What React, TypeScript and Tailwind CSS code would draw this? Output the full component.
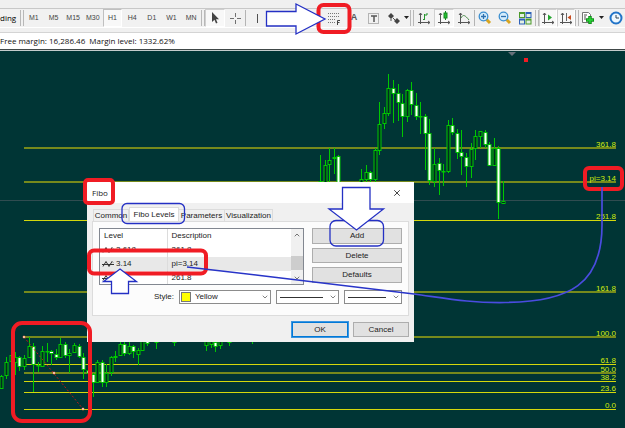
import type { ReactNode } from "react";
import { ChevronDown, ChevronUp, X } from "lucide-react";

const timeframes = ["M1", "M5", "M15", "M30", "H1", "H4", "D1", "W1", "MN"];

const fiboLines = [
  { y: 148, label: "361.8", soft: true },
  { y: 182, label: "pi=3.14", soft: true },
  { y: 220, label: "251.8" },
  { y: 292, label: "161.8", soft: true },
  { y: 337, label: "100.0", soft: true },
  { y: 364, label: "61.8" },
  { y: 373, label: "50.0", soft: true },
  { y: 381, label: "38.2" },
  { y: 392, label: "23.6" },
  { y: 409, label: "0.0" },
];

// x, high, low, body top, body bottom, falling
type Candle = [number, number, number, number, number, 0 | 1];

const candles: Candle[] = [
  [1, 375, 389, 376, 389, 0],
  [6, 357, 379, 362, 376, 0],
  [11, 353, 372, 355, 362, 0],
  [15, 352, 375, 357, 363, 0],
  [19, 356, 371, 357, 367, 1],
  [24, 355, 370, 358, 367, 0],
  [29, 337, 358, 346, 358, 0],
  [33, 343, 392, 346, 365, 1],
  [38, 362, 372, 365, 366, 0],
  [42, 346, 367, 351, 367, 0],
  [47, 343, 362, 351, 352, 0],
  [51, 350, 365, 351, 354, 1],
  [56, 349, 360, 354, 358, 1],
  [60, 338, 358, 344, 358, 0],
  [65, 342, 358, 344, 356, 1],
  [69, 349, 373, 353, 356, 0],
  [74, 343, 353, 345, 353, 0],
  [79, 344, 358, 346, 357, 1],
  [83, 353, 379, 357, 370, 1],
  [88, 368, 409, 370, 374, 1],
  [93, 373, 397, 374, 383, 1],
  [97, 360, 383, 362, 383, 0],
  [102, 360, 387, 362, 383, 1],
  [106, 364, 387, 373, 383, 0],
  [111, 356, 376, 357, 373, 0],
  [115, 351, 362, 356, 358, 0],
  [120, 342, 356, 344, 356, 0],
  [124, 342, 356, 344, 354, 1],
  [129, 342, 355, 346, 354, 0],
  [133, 345, 358, 346, 352, 1],
  [138, 348, 365, 350, 355, 0],
  [142, 340, 351, 340, 351, 0],
  [147, 340, 346, 340, 344, 1],
  [156, 340, 349, 340, 343, 0],
  [174, 340, 346, 340, 343, 0],
  [206, 340, 351, 340, 346, 0],
  [211, 340, 348, 340, 345, 0],
  [215, 340, 352, 342, 347, 1],
  [220, 340, 349, 340, 346, 0],
  [229, 340, 346, 340, 343, 0],
  [252, 340, 344, 340, 342, 0],
  [320, 155, 182, 181, 182, 0],
  [325, 160, 182, 165, 183, 0],
  [329, 148, 182, 160, 165, 0],
  [334, 148, 174, 157, 159, 0],
  [338, 155, 182, 156, 183, 1],
  [361, 169, 182, 179, 183, 0],
  [366, 165, 182, 172, 180, 0],
  [370, 171, 182, 172, 180, 1],
  [375, 148, 182, 150, 180, 0],
  [379, 102, 155, 124, 151, 0],
  [384, 107, 129, 113, 124, 0],
  [388, 74, 116, 88, 114, 0],
  [393, 80, 123, 88, 94, 1],
  [398, 84, 121, 93, 103, 1],
  [402, 94, 137, 103, 117, 1],
  [407, 89, 122, 90, 117, 0],
  [411, 82, 115, 90, 105, 1],
  [416, 93, 120, 105, 117, 1],
  [420, 102, 134, 116, 117, 0],
  [425, 114, 170, 116, 134, 1],
  [429, 119, 185, 133, 181, 1],
  [434, 148, 187, 164, 182, 0],
  [439, 158, 195, 163, 171, 1],
  [443, 164, 186, 171, 172, 0],
  [448, 120, 173, 125, 172, 0],
  [452, 118, 135, 125, 133, 1],
  [457, 129, 159, 133, 153, 1],
  [461, 130, 175, 152, 157, 1],
  [466, 153, 187, 157, 167, 1],
  [471, 143, 178, 149, 167, 0],
  [475, 130, 160, 136, 149, 0],
  [480, 131, 148, 131, 137, 0],
  [485, 130, 148, 132, 145, 1],
  [489, 142, 166, 144, 166, 1],
  [494, 138, 166, 148, 166, 0],
  [498, 146, 219, 148, 203, 1],
  [503, 181, 204, 201, 204, 0],
];

const levels = [
  { level: "2.618", description: "261.8" },
  { level: "3.14", description: "pi=3.14", selected: true },
  { level: "", description: "261.8" },
];

function Separator() {
  return <div className="h-4 w-px shrink-0 bg-[#b4b4b4]" />;
}

function Grip() {
  return <div className="h-4 w-1 shrink-0 border-x border-[#b8b8b8]" />;
}

interface ToolProps {
  label: string;
  active?: boolean;
  narrow?: boolean;
  children: ReactNode;
}

function Tool({ label, active, narrow, children }: ToolProps) {
  return (
    <button
      aria-label={label}
      className={`flex h-[18px] shrink-0 items-center justify-center ${narrow ? "w-[18px]" : "w-5"} ${
        active ? "border border-[#d0d0d0] border-r-white border-b-white bg-[#f8f8f8]" : ""
      }`}
    >
      <svg viewBox="0 0 14 14" className="h-3.5 w-3.5 shrink-0" fill="none" stroke="#505050">
        {children}
      </svg>
    </button>
  );
}

function Axes() {
  return <path d="M3.5 2v11M1 11.5h12M2 4l1.5-2L5 4M11 10l2 1.5-2 1.5" stroke="#555" />;
}

function Magnifier({ plus }: { plus?: boolean }) {
  return (
    <>
      <path d="M8.500 8.500l3.500 3.500" stroke="#d8a520" strokeWidth="3" />
      <circle cx="5.500" cy="5.500" r="4.300" fill="#d4ecfc" stroke="#3c8fd0" strokeWidth="1.300" />
      <path d={plus ? "M3 5.500h5M5.500 3v5" : "M3 5.500h5"} stroke="#2c6fae" strokeWidth="1.300" />
    </>
  );
}

function Toolbar() {
  return (
    <div className="flex h-5 items-center overflow-hidden border-y border-t-[#c8c8c8] border-b-white bg-[#f1f1f1]">
      <button className="w-5 shrink-0 text-left font-['Open_Sans'] text-[8px] text-black">ding</button>
      <Grip />
      <div className="grid w-[177px] shrink-0 grid-cols-9">
        {timeframes.map((name) => (
          <button
            key={name}
            className={`h-[18px] text-center text-[7px] text-[#444] ${
              name === "H1" ? "border border-[#c0c0c0] border-r-white border-b-white bg-[#f8f8f8]" : ""
            }`}
          >
            {name}
          </button>
        ))}
      </div>
      <Grip />
      <Tool label="Cursor" active>
        <path d="M4 1v10l2.500-2.200L8 12.500l1.500-.7L8 8.300h3z" fill="#444" stroke="none" />
      </Tool>
      <Tool label="Crosshair">
        <path d="M7.500 2v4M7.500 9v4M2 7.500h4M9 7.500h4" stroke="#707070" />
      </Tool>
      <Separator />
      <Tool label="Vertical line">
        <path d="M8.500 3v9" />
      </Tool>
      <div className="w-[58px] shrink-0" />
      <Tool label="Fibonacci retracement">
        <path d="M1 2.500h11M1 5.500h11M1 8.500h8M1 11.500h7" stroke="#777" strokeDasharray="1 1" />
        <path d="M10.500 14V9.500H13M10.500 11.500h2" stroke="#444" />
      </Tool>
      <button className="w-5 shrink-0 text-center text-[9px] font-bold text-[#555]">A</button>
      <Tool label="Text label">
        <rect x="1.500" y="2.500" width="10" height="10" stroke="#777" strokeDasharray="1 1" />
        <path d="M4 5h6M7 5v6" stroke="#555" strokeWidth="1.500" />
      </Tool>
      <Tool label="Arrows">
        <path d="M1 5l3-3 3 3-3 3zM7 10l3-3 3 3-3 3z" fill="#444" stroke="none" />
        <path d="M6 7l2 2M4 8v2" />
      </Tool>
      <div className="flex w-[6px] shrink-0">
        <svg viewBox="0 0 6 4" className="h-1 w-1.5">
          <path d="M0 0h5L2.500 3z" fill="#222" />
        </svg>
      </div>
      <Grip />
      <Tool label="Bar chart">
        <Axes />
        <path d="M7.500 3v6M7.500 4H10V2M6 8.500h2" stroke="#25952e" />
      </Tool>
      <Tool label="Candlesticks" active>
        <Axes />
        <path d="M8.500 0v9" stroke="#178a20" />
        <rect x="7" y="2" width="3" height="5" fill="#22c030" stroke="#178a20" />
      </Tool>
      <Tool label="Line chart">
        <Axes />
        <path d="M4 7c2-4 4-3 8 2" stroke="#4a8a4a" />
      </Tool>
      <Separator />
      <Tool label="Zoom in">
        <Magnifier plus />
      </Tool>
      <Tool label="Zoom out">
        <Magnifier />
      </Tool>
      <Tool label="Tile windows">
        <g stroke="none">
          <path d="M1 1h6v6H1zM7.500 7.500h6v6h-6z" fill="#4c9a2a" />
          <path d="M7.500 1h6v6h-6zM1 7.500h6v6H1z" fill="#2f62b8" />
          <path d="M2 3h4v3H2zM8.500 3h4v3h-4zM2 9.500h4v3H2zM8.500 9.500h4v3h-4z" fill="#e4f0e4" />
        </g>
      </Tool>
      <Grip />
      <Tool label="Auto scroll" active narrow>
        <Axes />
        <path d="M7 3.500v6l4-3z" fill="#25a530" stroke="none" />
      </Tool>
      <Tool label="Chart shift" active narrow>
        <Axes />
        <path d="M7.500 2v8" stroke="#666" />
        <path d="M12 4v5L8.500 6.500z" fill="#c84c20" stroke="none" />
      </Tool>
      <Grip />
      <Tool label="Indicators" narrow>
        <path d="M1.500 1.500h6l2 2v8h-8z" fill="#fff" stroke="#777" />
        <path d="M3 4h3M3 6h2M3 8h2" />
        <path d="M9 5v8M5 9h8" stroke="#12901a" strokeWidth="3.500" />
        <path d="M9 6v6M6 9h6" stroke="#28d838" strokeWidth="1.500" />
      </Tool>
      <div className="flex w-2.5 shrink-0 justify-center">
        <svg viewBox="0 0 6 4" className="h-1 w-1.5">
          <path d="M0 0h5L2.500 3z" fill="#222" />
        </svg>
      </div>
      <Tool label="Periods" narrow>
        <circle cx="7" cy="7" r="5.500" fill="#eef8ff" stroke="#2274c8" strokeWidth="2" />
        <path d="M7 4v3h3" stroke="#345" />
      </Tool>
    </div>
  );
}

function CandleShape({ candle }: { candle: Candle }) {
  const [x, high, low, top, bottom, falling] = candle;
  return (
    <g stroke="#00c800">
      <path d={`M${x + 0.5} ${high}V${low}`} />
      <rect
        x={x - 1}
        y={top + 0.5}
        width="3"
        height={Math.max(bottom - top - 1, 0.5)}
        fill={falling ? "#fff" : "#002a20"}
      />
    </g>
  );
}

function Chart() {
  return (
    <svg viewBox="0 51 625 377" className="h-[377px] w-[625px]" role="img" aria-label="Price chart">
      <path d="M508 52h8l-4 4z" fill="#66707a" />
      <path d="M0 200.500h625" stroke="#304c50" />
      {fiboLines.map((line) => (
        <g key={line.label}>
          <path
            d={line.soft ? `M24 ${line.y}H616` : `M24 ${line.y + 0.5}H616`}
            stroke={line.soft ? "#768a1c" : "#d4d80c"}
            strokeWidth={line.soft ? 2 : 1}
          />
          <text x="616" y={line.y - 1} textAnchor="end" className="fill-[#d0ec0c] text-[8px]">
            {line.label}
          </text>
        </g>
      ))}
      {candles.map((candle) => (
        <CandleShape key={candle[0]} candle={candle} />
      ))}
      <path d="M24 337L83 409" stroke="#c01818" strokeDasharray="2 2" />
      <path d="M23 336h2v2h-2zM53 372h2v2h-2zM82 408h2v2h-2z" fill="#fff" stroke="#f06030" strokeWidth="0.500" />
      <rect x="524" y="58" width="4" height="4" fill="#f01c24" />
    </svg>
  );
}

function LineSelect({ label, className }: { label: string; className: string }) {
  return (
    <div className={`relative flex items-center ${className}`}>
      <select
        aria-label={label}
        className="h-3.5 w-full appearance-none border border-[#8c8c8c] bg-white"
      >
        <option value="solid" />
      </select>
      <div className="pointer-events-none absolute right-4 left-1 h-px bg-[#333]" />
      <ChevronDown className="pointer-events-none absolute right-0.5 h-2 w-2 text-[#444]" />
    </div>
  );
}

function LevelTable() {
  return (
    <div className="flex h-[57px] w-[205px] overflow-hidden border border-[#828790] bg-white">
      <table className="flex-1 table-fixed border-collapse self-start text-left">
        <thead>
          <tr className="h-3.5">
            <th className="w-[67px] border-r border-[#dcdcdc] pl-1 font-normal">Level</th>
            <th className="pl-1 font-normal">Description</th>
          </tr>
        </thead>
        <tbody>
          {levels.map((row, i) => (
            <tr key={i} className={`h-3.5 ${row.selected ? "bg-[#e8e8e8]" : ""}`}>
              <td className="border-r border-[#dcdcdc] pl-0.5">
                <div className="flex items-center gap-0.5">
                  <svg viewBox="0 0 12 8" className="h-2 w-3" fill="none" stroke="#333">
                    <path d="M0 4.500h12M1 6.500l3-5 3 5 3-5 1 1" />
                  </svg>
                  {row.level}
                </div>
              </td>
              <td className="pl-1">{row.description}</td>
            </tr>
          ))}
        </tbody>
      </table>
      <div className="flex w-3 flex-col items-center justify-between bg-[#f0f0f0] py-0.5">
        <ChevronUp className="h-2 w-2 text-[#333]" />
        <div className="mt-auto h-3.5 w-full bg-[#cdcdcd]" />
        <ChevronDown className="mt-1 h-2 w-2 text-[#333]" />
      </div>
    </div>
  );
}

function FiboDialog() {
  const plain = "border border-[#adadad] bg-[#e1e1e1] text-center";
  const tab = "h-3 border-t border-r border-[#dcdcdc] text-center";
  return (
    <div
      role="dialog"
      aria-labelledby="dialog-title"
      className="absolute top-[131px] left-[87px] flex h-[160px] w-[327px] flex-col bg-[#f0f0f0] text-[8px] leading-[10px] text-[#222]"
    >
      <div className="flex h-[21px] items-center justify-between bg-white pr-3 pl-[5px]">
        <h2 id="dialog-title" className="font-['Open_Sans'] text-[8px]">
          Fibo
        </h2>
        <button aria-label="Close">
          <X className="h-2.5 w-2.5" />
        </button>
      </div>
      <div role="tablist" className="mt-1 flex items-end px-1.5">
        <button role="tab" className={`w-9 border-l ${tab}`}>
          Common
        </button>
        <button role="tab" aria-selected="true" className="h-3.5 w-[50px] border border-b-0 border-[#dcdcdc] bg-white text-center">
          Fibo Levels
        </button>
        <button role="tab" className={`w-[46px] ${tab}`}>
          Parameters
        </button>
        <button role="tab" className={`w-12 ${tab}`}>
          Visualization
        </button>
      </div>
      <div className="mx-[5px] h-[95px] border border-[#dcdcdc] bg-[#fcfcfc] px-1.5 pt-1.5">
        <div className="flex justify-between">
          <LevelTable />
          <div className="flex w-[90px] flex-col gap-1">
            <button className={`h-4 ${plain}`}>Add</button>
            <button className={`h-[15px] ${plain}`}>Delete</button>
            <button className={`h-4 ${plain}`}>Defaults</button>
          </div>
        </div>
        <div className="mt-[5px] flex items-center justify-end gap-[5px]">
          <label htmlFor="line-color">Style:</label>
          <div className="relative flex w-[92px] items-center">
            <select
              id="line-color"
              className="h-3.5 w-full appearance-none border border-[#8c8c8c] bg-white pl-[15px]"
            >
              <option>Yellow</option>
            </select>
            <div className="pointer-events-none absolute left-0.5 h-2.5 w-2.5 border border-[#777] bg-[#ffff00]" />
            <ChevronDown className="pointer-events-none absolute right-0.5 h-2 w-2 text-[#444]" />
          </div>
          <LineSelect label="Line type" className="w-[63px]" />
          <LineSelect label="Line width" className="w-[58px]" />
        </div>
      </div>
      <div className="flex justify-end gap-[5px] px-[5px] pt-1.5">
        <button className="h-[15px] w-14 border border-[#0078d7] bg-[#e1e1e1] text-center outline outline-[#3c96e0]">
          OK
        </button>
        <button className={`h-[15px] w-14 ${plain}`}>Cancel</button>
      </div>
    </div>
  );
}

// Hand-drawn marks that sit over the whole terminal
function Annotations() {
  return (
    <svg
      viewBox="0 0 625 428"
      className="pointer-events-none absolute top-0 left-0 h-[428px] w-[625px]"
      fill="none"
      aria-hidden="true"
    >
      <g stroke="#f01c24" strokeWidth="4">
        <rect x="318.500" y="5" width="31" height="27" rx="5" />
        <rect x="85" y="180" width="28" height="23" rx="3" />
        <rect x="89" y="250.500" width="117" height="23" rx="5" />
        <rect x="13" y="323" width="77" height="98" rx="9" />
        <rect x="585" y="168" width="37" height="21" rx="4" />
      </g>
      <g stroke="#2430c4" strokeWidth="1.300">
        <rect x="122" y="203.500" width="62.500" height="20" rx="5" />
        <rect x="330" y="220.500" width="53.500" height="25.500" rx="6" />
        <g fill="#fff">
          <path d="M266.500 11.500H296V4l29 15-29 15v-8h-29.500z" />
          <path d="M342.500 187.500H370v21.500h13.500l-27 21-27.500-21h13.500z" />
          <path d="M120 269l16.500 12.500h-8v12h-17v-12h-8z" />
        </g>
      </g>
      <path d="M187 267L260 275.500 414 294" stroke="#2834c8" strokeWidth="1.500" />
      <path
        d="M414 294C450 299 470 303 505 302.500C570 302 602 284 602 225V187"
        stroke="#4a4ce0"
        strokeWidth="1.700"
      />
    </svg>
  );
}

export default function App() {
  return (
    <div
      className="relative flex min-h-screen flex-col overflow-hidden bg-[#003535]"
      style={{ fontFamily: '"Liberation Sans", Arial, sans-serif' }}
    >
      <header className="bg-[#f0f0f0] pt-2">
        <Toolbar />
        <div className="mt-1 flex h-[17px] items-center gap-1 overflow-hidden border-t border-[#d4d4d4] bg-white font-['Open_Sans'] text-[8px] whitespace-nowrap text-[#111]">
          <span>Free margin: 16,286.46</span>
          <span>Margin level: 1332.62%</span>
        </div>
        <div className="h-0.5 border-t border-[#404848] bg-[#c4cccc]" />
      </header>
      <main className="relative flex-1">
        <Chart />
        <FiboDialog />
      </main>
      <Annotations />
    </div>
  );
}
